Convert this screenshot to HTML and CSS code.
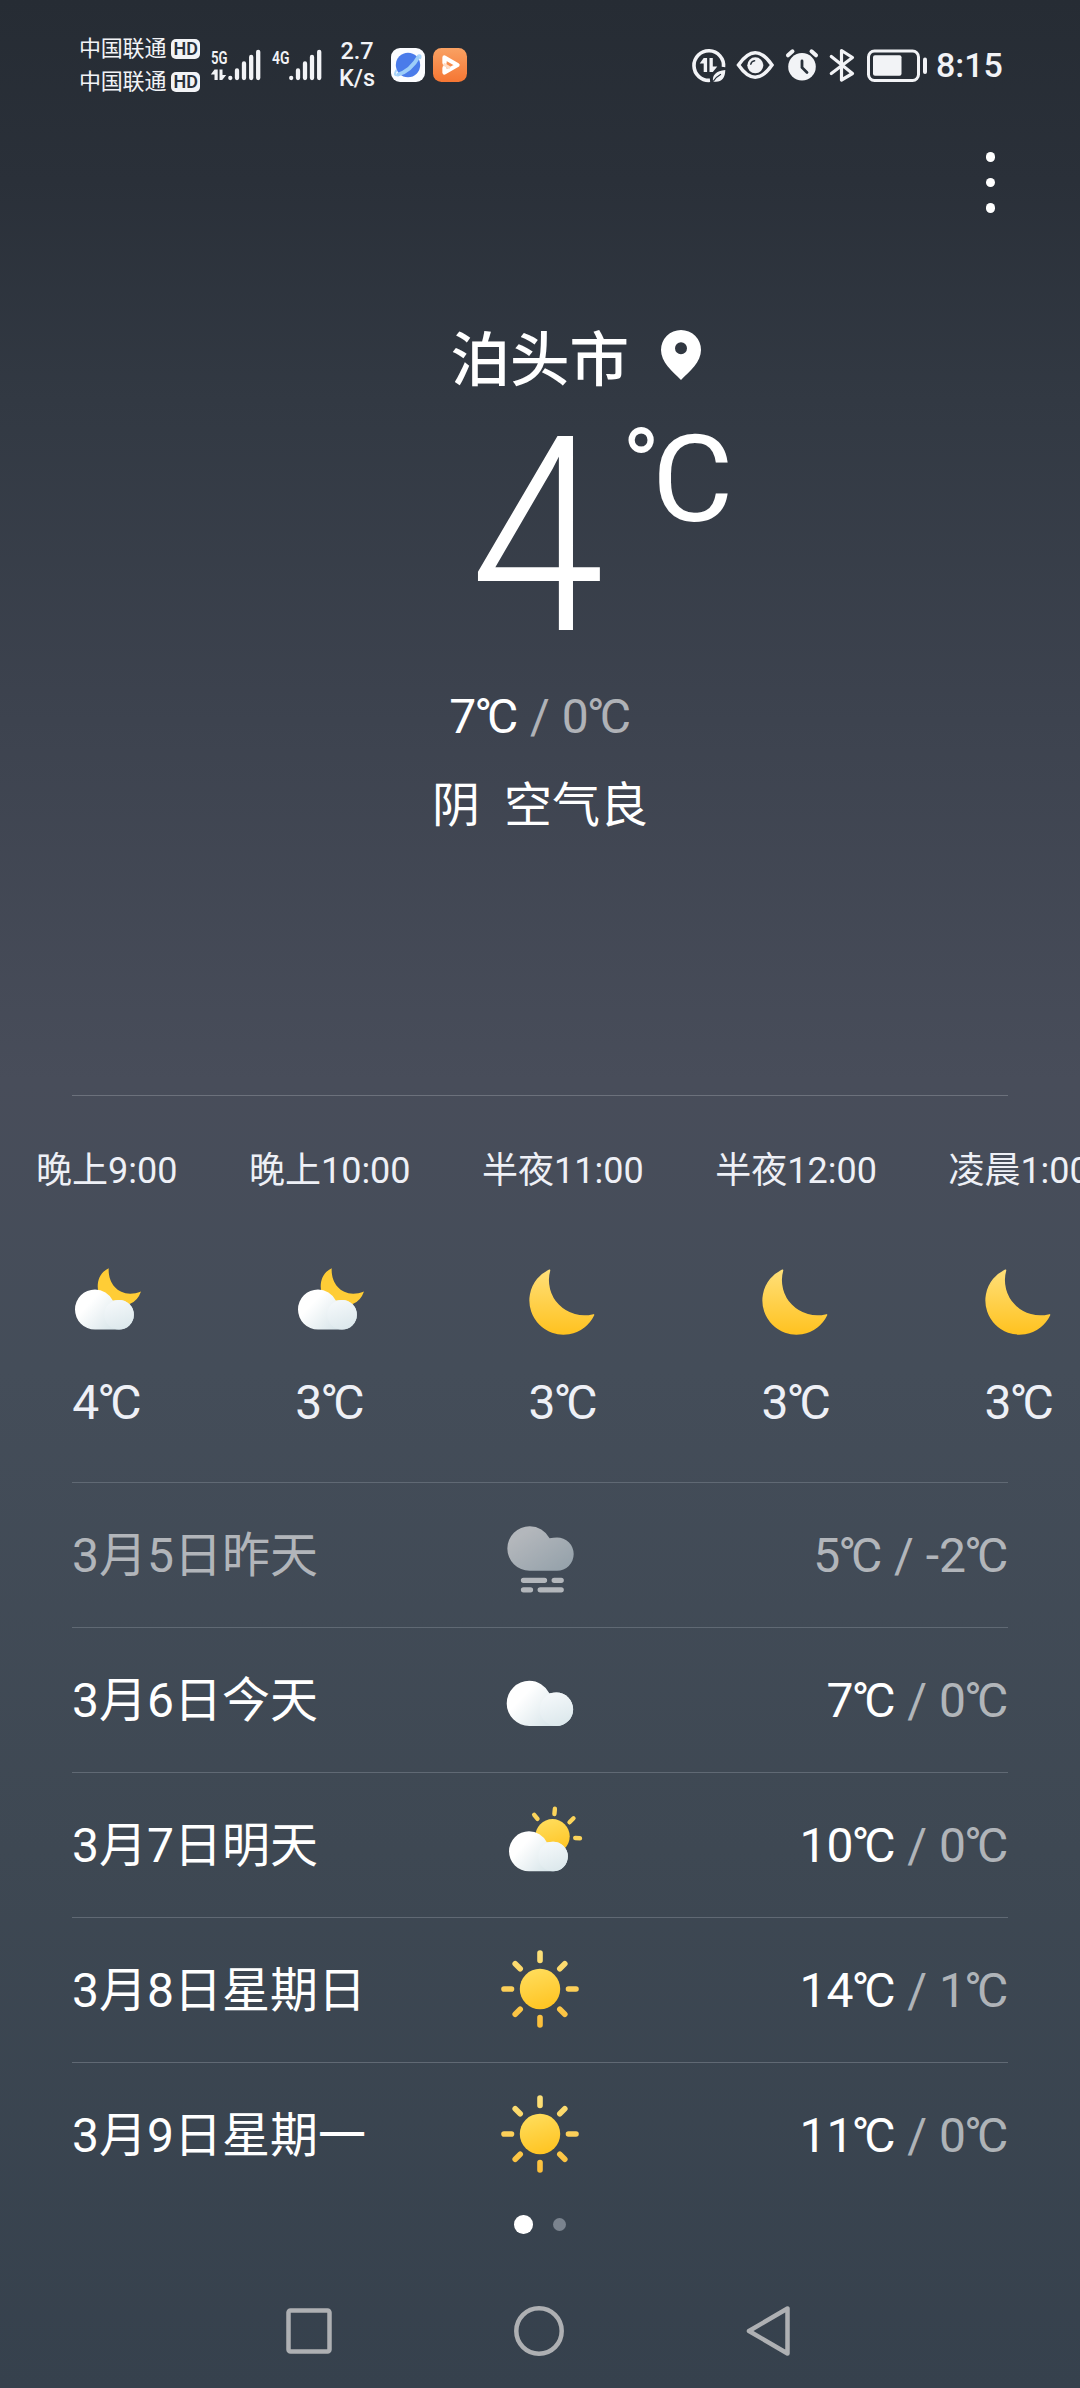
FILE: index.html
```html
<!DOCTYPE html>
<html lang="zh-CN">
<head>
<meta charset="utf-8">
<title>天气</title>
<link rel="stylesheet" href="styles.css">
</head>
<body>
<svg class="defs" width="0" height="0" aria-hidden="true">
  <defs>
    <linearGradient id="gold" gradientUnits="userSpaceOnUse" x1="0" y1="0" x2="0" y2="66"><stop offset="0" stop-color="#ffe07a"/><stop offset="1" stop-color="#ffc21f"/></linearGradient>
    <linearGradient id="disc" x1="0.3" y1="0" x2="0.6" y2="1"><stop offset="0" stop-color="#ffdd5c"/><stop offset="1" stop-color="#ffc422"/></linearGradient>
    <linearGradient id="rays" gradientUnits="userSpaceOnUse" x1="0" y1="0" x2="0" y2="80"><stop offset="0" stop-color="#fde27c"/><stop offset="1" stop-color="#fbbd36"/></linearGradient>
    <linearGradient id="cloudA" gradientUnits="userSpaceOnUse" x1="8" y1="6" x2="44" y2="40"><stop offset="0.2" stop-color="#fff"/><stop offset="1" stop-color="#d3e2e7"/></linearGradient>
    <linearGradient id="cloudB" gradientUnits="userSpaceOnUse" x1="36" y1="10" x2="47" y2="40"><stop offset="0" stop-color="#f6f9fb"/><stop offset="1" stop-color="#dce8ec"/></linearGradient>
    <symbol id="cloud" viewBox="0 0 59 40">
      <path fill="url(#cloudA)" d="M20 0A20 20 0 0 0 20 40H44A14.8 14.8 0 0 0 44 10.4Q41 10.4 37.8 11A20 20 0 0 0 20 0Z"/>
      <circle fill="url(#cloudB)" cx="44.1" cy="25.2" r="14.8"/>
    </symbol>
    <symbol id="moon" viewBox="0 0 66 67">
      <path fill="url(#gold)" stroke="url(#gold)" stroke-width="1.6" stroke-linejoin="round" d="M20.5 1.6A33.3 33.3 0 1 0 64.5 46.2A36 36 0 0 1 20.5 1.6Z"/>
    </symbol>
    <symbol id="cloudmoon" viewBox="0 0 67 62">
      <path fill="#ffcd36" d="M34 0.3C20 7 21 24 28 36H55Q63 33 66.3 23.5C47 31 33 18 34 0.3Z"/>
      <use href="#cloud" x="0.3" y="21.5" width="59" height="40"/>
    </symbol>
    <symbol id="sun" viewBox="0 0 80 80">
      <circle cx="40" cy="40" r="20.2" fill="url(#disc)"/>
      <path stroke="url(#rays)" stroke-width="5.6" stroke-linecap="round" d="M40.01 4V11.5M40 68.5V76M4 40.01H11.5M68.5 40H76M15.2 14.8L20.2 19.8M64.8 14.8L59.8 19.8M15.2 65.2L20.2 60.2M64.8 65.2L59.8 60.2"/>
    </symbol>
  </defs>
</svg>

<header class="status">
  <div class="carriers">
    <div class="carrier">中国联通<b>HD</b></div>
    <div class="carrier">中国联通<b>HD</b></div>
  </div>
  <svg class="signals" width="112" height="34" viewBox="210 47 112 34">
    <g class="gen"><text x="211" y="62.5" textLength="16.5" lengthAdjust="spacingAndGlyphs">5G</text><text x="272" y="62.5" textLength="17.5" lengthAdjust="spacingAndGlyphs">4G</text></g>
    <path class="bars" d="M230.3 77v.1M237 69.5V77M244 62.5V77M251.2 56V77M258.2 50.8V77M291.2 77v.1M298 69.5V77M305 62.5V77M312 56V77M319.2 50.8V77"/>
    <path fill="#f2f3f6" d="M214.5 68.5h3.2V79h-3.2v-5.5h-3.7zM219.5 68.5h3v5.5h3.7l-4 5h-2.7z"/>
  </svg>
  <div class="speed">2.7<br>K/s</div>
  <div class="apps">
    <svg width="34" height="34" viewBox="0 0 34 34"><rect width="34" height="34" rx="9" fill="#fbfcff"/><circle cx="17" cy="17" r="12.2" fill="#4a7bea"/><path d="M6 27Q20 23 28 8" fill="none" stroke="#9dcdf8" stroke-width="3.8"/><path d="M6 27Q2 28 5.5 22M27 7.5Q31 6 29 11" fill="none" stroke="#a9d4fa" stroke-width="2"/></svg>
    <svg width="34" height="34" viewBox="0 0 34 34"><defs><linearGradient id="appfill" x2="0" y2="1"><stop stop-color="#f9a163"/><stop offset="1" stop-color="#f57633"/></linearGradient></defs><rect width="34" height="34" rx="8.5" fill="url(#appfill)"/><path d="M11.5 15V9.5L24.5 17L11.5 24.5V20" fill="none" stroke="#fff" stroke-width="4.3" stroke-linejoin="round" stroke-linecap="round"/><path d="M10.5 16L17 20" stroke="#ffdcc5" stroke-width="3"/></svg>
  </div>
  <svg class="system" width="236" height="38" viewBox="692 45 236 38" fill="none" stroke="#f2f3f6" stroke-linecap="round">
    <path stroke-width="3.6" stroke-linecap="butt" d="M711 79.3A14.8 14.8 0 1 1 724.5 66"/>
    <path fill="#f2f3f6" stroke="none" d="M704.7 57h3.4v14h-3.4v-8.5h-4zM710.5 57h3.3v8.5h4.5l-4.5 5.5h-3.3zM714 80.5Q712.5 70.5 726.3 69Q726 82.5 714 80.5Z"/>
    <path stroke="#28303a" stroke-width="1.3" d="M714.5 80Q717 76 721.5 73.5"/>
    <path stroke-width="3.5" d="M739.5 64Q756.2 39.6 773 64Q756.2 88.4 739.5 64Z"/><circle cx="756.3" cy="64.3" r="8" fill="#f2f3f6" stroke="none"/><path stroke="#28303a" stroke-width="1.5" d="M751.8 63.2Q752.5 60 755.6 59.7"/>
    <circle cx="803" cy="65.8" r="13.8" fill="#f2f3f6" stroke="none"/><path stroke-width="4" d="M789 54.3l4.5-4M817 54.3l-4.5-4"/><path stroke="#28303a" stroke-width="2.8" d="M803 60v6.5l5 5"/>
    <path stroke-width="3.2" stroke-linejoin="round" d="M832.3 55.5L853.5 72.5L842.5 79V49.5L853.5 56.5L832.3 72.5"/>
    <rect x="869.5" y="50" width="50" height="29.5" rx="6" stroke-width="3"/><rect x="874" y="54.3" width="28.5" height="20.5" rx="2" fill="#f2f3f6" stroke="none"/><path stroke-width="4" d="M926 58.5v12.5"/>
  </svg>
  <div class="clock">8:15</div>
</header>

<nav class="menu"><i></i><i></i><i></i></nav>

<section class="now">
  <div class="city"><span>泊头市</span>
    <svg width="40" height="50" viewBox="0 0 40 50"><path fill="#fff" fill-rule="evenodd" d="M20 0A20 20 0 0 0 0 20C0 32 11 41 20 50C29 41 40 32 40 20A20 20 0 0 0 20 0ZM20 12.2A6 6 0 1 1 20 24.2A6 6 0 0 1 20 12.2Z"/></svg>
  </div>
  <div class="big"><span class="num">4</span><span class="deg">°</span><span class="unit">C</span></div>
  <div class="range">7<em>°C</em><span class="low"> / 0<em>°C</em></span></div>
  <div class="desc"><span>阴</span><span>空气良</span></div>
</section>

<section class="hours">
  <div class="hour"><span>晚上9:00</span><svg><use href="#cloudmoon" x="0.7" y="0" width="67" height="62"/></svg><b>4<em>°C</em></b></div>
  <div class="hour"><span>晚上10:00</span><svg><use href="#cloudmoon" x="0.7" y="0" width="67" height="62"/></svg><b>3<em>°C</em></b></div>
  <div class="hour"><span>半夜11:00</span><svg><use href="#moon" x="-1" y="0.7" width="66" height="67"/></svg><b>3<em>°C</em></b></div>
  <div class="hour"><span>半夜12:00</span><svg><use href="#moon" x="-1" y="0.7" width="66" height="67"/></svg><b>3<em>°C</em></b></div>
  <div class="hour"><span>凌晨1:00</span><svg><use href="#moon" x="-1" y="0.7" width="66" height="67"/></svg><b>3<em>°C</em></b></div>
</section>

<section class="days">
  <div class="day past"><span>3月5日昨天</span>
    <svg viewBox="0 -7.8 80 80"><defs><linearGradient id="fog" x2="1" y2="1"><stop offset=".2" stop-color="#fff"/><stop offset="1" stop-color="#c8d8e0"/></linearGradient></defs><g opacity=".6"><path fill="url(#fog)" d="M29.6 4.5A22.2 22.2 0 0 0 29.6 49H57A16.6 16.6 0 0 0 57 15.6Q53.5 15.6 49.6 16.5A22.2 22.2 0 0 0 29.6 4.5Z"/><path stroke="#fff" stroke-width="5.3" stroke-linecap="round" d="M23.5 58.5H44.5M54.2 58.5H61.2M23.5 68H30.5M40.2 68H61.2"/></g></svg>
    <span class="temps">5<em>°C</em> / -2<em>°C</em></span></div>
  <div class="day"><span>3月6日今天</span>
    <svg viewBox="0 -7.8 80 80"><use href="#cloud" x="6.7" y="14" width="66.6" height="45.2"/></svg>
    <span class="temps">7<em>°C</em><span class="low"> / 0<em>°C</em></span></span></div>
  <div class="day"><span>3月7日明天</span>
    <svg viewBox="0 -7.8 80 80"><circle cx="52.5" cy="24.5" r="17.2" fill="url(#disc)"/><path stroke="#fbd45b" stroke-width="4.4" stroke-linecap="round" d="M54.9-3L54.4 2.2M34.2 3L37.5 7M73.5 6.5L69.5 10.5M75.2 26.2L80 26.5"/><use href="#cloud" x="9" y="19.5" width="59" height="40"/></svg>
    <span class="temps">10<em>°C</em><span class="low"> / 0<em>°C</em></span></span></div>
  <div class="day"><span>3月8日星期日</span>
    <svg viewBox="0 0 80 80"><use href="#sun" width="80" height="80"/></svg>
    <span class="temps">14<em>°C</em><span class="low"> / 1<em>°C</em></span></span></div>
  <div class="day"><span>3月9日星期一</span>
    <svg viewBox="0 0 80 80"><use href="#sun" width="80" height="80"/></svg>
    <span class="temps">11<em>°C</em><span class="low"> / 0<em>°C</em></span></span></div>
</section>

<div class="pager"><i class="on"></i><i></i></div>

<footer class="navbar">
  <svg width="50" height="50" viewBox="0 0 50 50"><rect x="4.5" y="4.5" width="41" height="41" rx="2"/></svg>
  <svg width="50" height="50" viewBox="0 0 50 50"><circle cx="25" cy="25" r="22.7"/></svg>
  <svg width="50" height="50" viewBox="0 0 50 50"><path d="M43.5 2.5V47.5L5 25Z"/></svg>
</footer>
</body>
</html>
```
FILE: styles.css
```css
* { box-sizing: border-box; }
html { height: 2388px; overflow: hidden; }
body {
  margin: 0;
  width: 1080px;
  height: 2388px;
  overflow: hidden;
  display: flex;
  flex-direction: column;
  color: #fff;
  font-family: Roboto, "Noto Sans CJK SC", sans-serif;
  font-size: 48px;
  background: linear-gradient(#262c34 0, #2a3039 180px, #323943 400px, #3d434f 720px, #484d5a 1080px, #444d59 1370px, #3e4853 1850px, #36414d 2388px);
}
.defs { position: absolute; }
svg { display: block; overflow: visible; flex: none; }
symbol { overflow: visible; }
b { font-weight: inherit; }
i { display: block; border-radius: 50%; background: #fff; }

/* degree unit, set tight against the digits */
em {
  display: inline-block;
  width: 42px;
  font-style: normal;
  text-indent: -2px;
  letter-spacing: -5px;
  white-space: nowrap;
}

.status { flex: none; height: 130px; padding-left: 79px; display: flex; align-items: center; color: #f2f3f6; }
.carriers { display: flex; flex-direction: column; width: 132px; }
.carrier { display: flex; align-items: center; gap: 5px; height: 33px; font-size: 22px; line-height: 33px; letter-spacing: -.2px; }
.carrier b { width: 29px; height: 20px; border-radius: 5px; background: #f2f3f6; color: #28303a; font-size: 18px; font-weight: 600; line-height: 20px; text-align: center; letter-spacing: 0; }
.gen { font-size: 18px; font-weight: 600; fill: #f2f3f6; }
.bars { stroke: #f2f3f6; stroke-width: 4.3; stroke-linecap: round; fill: none; }
.status .signals { margin-left: -1px; }
.speed { width: 56px; margin-left: 7px; text-align: center; font-size: 23.5px; line-height: 27px; font-weight: 500; }
.apps { display: flex; gap: 8px; margin-left: 6px; }
.system { margin-left: 224px; }
.clock { margin-left: 9px; font-size: 34px; font-weight: 500; }

.menu { flex: none; align-self: flex-end; margin: 22px 85px 0 0; display: flex; flex-direction: column; gap: 16px; }
.menu i { width: 9.5px; height: 9.5px; }

.now { flex: none; height: 882px; display: flex; flex-direction: column; align-items: center; }
.city { height: 73px; margin-top: 112px; padding-left: 71px; display: flex; align-items: flex-start; }
.city span { font-size: 59.5px; font-weight: 500; line-height: 72px; width: 178px; margin-right: 32px; white-space: nowrap; }
.city svg { margin-top: 5px; }
.big { display: flex; align-items: flex-start; align-self: flex-start; height: 284px; margin-left: 470px; }
.num { width: 152px; font-size: 273px; font-weight: 300; line-height: 278px; transform: scaleX(.886); transform-origin: 0 50%; }
.unit { font-size: 120px; line-height: 164px; transform: scaleX(1.04); transform-origin: 0 50%; }
.deg { width: 30px; font-size: 102px; line-height: 136px; }
.range { height: 77px; line-height: 70px; white-space: pre; }
.low { color: rgba(255, 255, 255, .6); }
.desc { display: flex; gap: 24px; height: 90px; line-height: 93px; }

.hours { flex: none; height: 387px; padding: 46px 0 0 36px; display: flex; gap: 71.5px; position: relative; color: #eef0f6; }
.hours::before { content: ""; position: absolute; left: 72px; right: 72px; top: 0; height: 1px; background: #6c717c; }
.hour { flex: none; display: flex; flex-direction: column; align-items: center; }
.hour span { font-size: 36px; line-height: 60px; }
.hour svg { width: 66px; height: 66px; margin: 67px 0 34px; }
.hour b { line-height: 70px; }

.days { flex: none; margin: 0 72px; }
.day { height: 145px; padding-bottom: 2px; border-top: 1px solid #606974; display: grid; grid-template-columns: 1fr 80px 1fr; align-items: center; }
.day > span { padding-bottom: 6px; }
.day .temps { text-align: right; white-space: pre; padding: 3px 0 0; }
.temps em { text-align: left; }
.day svg { width: 80px; height: 80px; }
.past > span { color: rgba(255, 255, 255, .6); }

.pager { flex: none; height: 36px; display: flex; justify-content: center; align-items: center; gap: 20px; }
.pager i { width: 13px; height: 13px; background: #7a838e; }
.pager .on { width: 18.5px; height: 18.5px; background: #fff; }
.navbar { flex: none; display: flex; justify-content: space-between; padding: 0 286px 0 284px; margin-top: 63px; }
.navbar svg { fill: none; stroke: #aeb0b3; stroke-width: 4.5; stroke-linejoin: round; }
```
